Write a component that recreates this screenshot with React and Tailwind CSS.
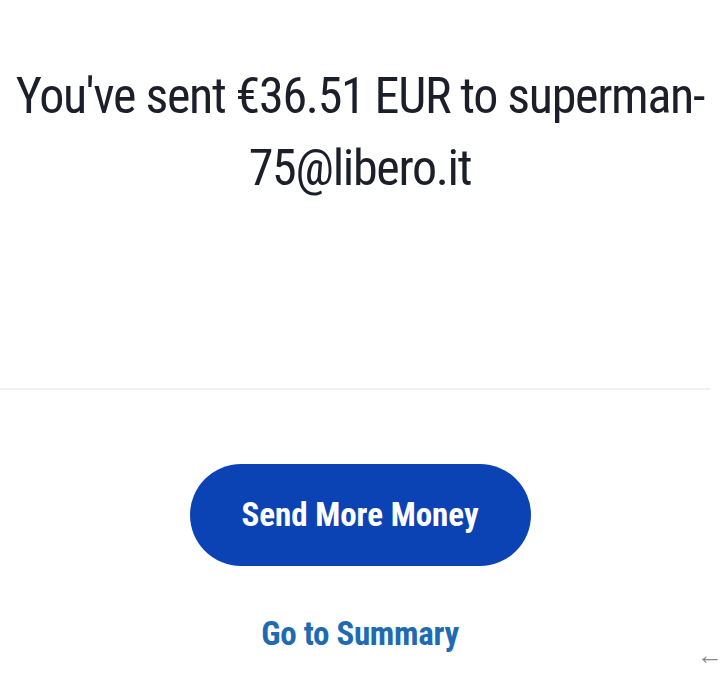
import React from 'react';

const App = () => {
  return (
    <div className="relative w-[720px] h-[676px] overflow-hidden bg-white font-['Liberation_Sans_Narrow','Roboto_Condensed',Roboto,sans-serif]">
      <div className="pt-[60px] text-center text-[50px] leading-[72px] tracking-[-1.3px] text-[#1c1f2a] whitespace-nowrap">
        You've sent €36.51 EUR to superman-
        <br />
        75@libero.it
      </div>

      <div className="mt-[184px] mr-[10px] h-[2px] bg-[#f1f1f1]" />

      <div className="mt-[74px] flex flex-col items-center">
        <button className="w-[341px] h-[102px] rounded-full bg-[#0b43b5] text-white text-[33px] font-bold">
          Send More Money
        </button>
        <a className="mt-[48px] text-[33px] leading-[40px] font-bold tracking-[-0.3px] text-[#1f6bb3]">Go to Summary</a>
      </div>

      <span className="absolute right-[-3px] top-[636px] text-[26px] font-bold text-[#8a8a8a]">←</span>
    </div>
  );
};

export default App;
